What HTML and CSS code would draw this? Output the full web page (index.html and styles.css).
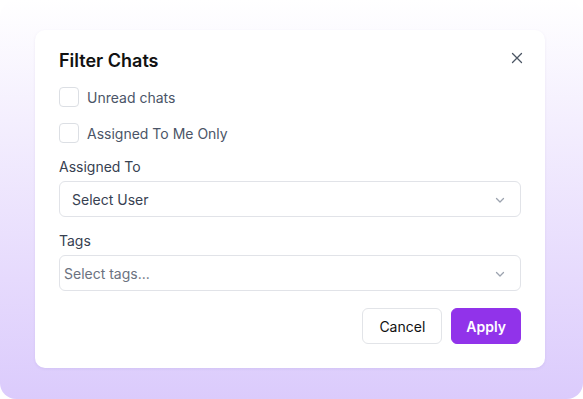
FILE: index.html
```html
<!doctype html>
<html>
  <head>
    <title>Filter Chats</title>
    <meta charset='utf-8'>
    <link rel="stylesheet" href="styles.css">
  </head>
  <body>
    <div class='bg-frame'>
      <div class='fc-dialog'>
        <div class='fc-header'>
          <h2 class='fc-title'>Filter Chats</h2>
          <span class='fc-close'>
            <svg width='12' height='12' viewBox='0 0 12 12'><path d='M1.5 1.5L10.5 10.5M10.5 1.5L1.5 10.5' stroke='#4b5563' stroke-width='1.3' stroke-linecap='round'/></svg>
          </span>
        </div>
        <label class='fc-check'><span class='fc-box'></span>Unread chats</label>
        <label class='fc-check'><span class='fc-box'></span>Assigned To Me Only</label>
        <div class='fc-label'>Assigned To</div>
        <div class='fc-select'>
          <span>Select User</span>
          <svg class='fc-chevron' width='12' height='12' viewBox='0 0 12 12'><path d='M2.5 4.5L6 8L9.5 4.5' fill='none' stroke='#9ca3af' stroke-width='1.3' stroke-linecap='round' stroke-linejoin='round'/></svg>
        </div>
        <div class='fc-label'>Tags</div>
        <div class='fc-select fc-tags'>
          <span>Select tags...</span>
          <svg class='fc-chevron' width='12' height='12' viewBox='0 0 12 12'><path d='M2.5 4.5L6 8L9.5 4.5' fill='none' stroke='#9ca3af' stroke-width='1.3' stroke-linecap='round' stroke-linejoin='round'/></svg>
        </div>
        <div class='fc-actions'>
          <button class='fc-btn fc-cancel'>Cancel</button>
          <button class='fc-btn fc-apply'>Apply</button>
        </div>
      </div>
    </div>
  </body>
</html>
```

FILE: styles.css
```css
body {
  margin: 0;
  background-color: #fff;
  font-family: Inter, 'Noto Sans', sans-serif;
}
.bg-frame {
  width: 583px;
  height: 399px;
  box-sizing: border-box;
  padding: 30px 38px 0 35px;
  border-radius: 16px;
  background: linear-gradient(180deg, #ffffff 0%, #f4effe 30%, #e6dafd 70%, #dbcbfc 100%);
}
.fc-dialog {
  background-color: #fff;
  border-radius: 10px;
  padding: 19px 24px 24px 24px;
  box-shadow: 0 1px 3px rgba(80, 50, 140, 0.08);
}
.fc-header {
  display: flex;
  justify-content: space-between;
  align-items: flex-start;
  margin-bottom: 14px;
}
.fc-title {
  margin: 0;
  font-size: 18px;
  line-height: 24px;
  font-weight: 600;
  color: #111;
}
.fc-close {
  display: flex;
  margin-top: 3px;
  margin-right: -2px;
}
.fc-check {
  display: flex;
  align-items: center;
  gap: 8px;
  height: 20px;
  font-size: 14px;
  color: #4b5567;
  margin-bottom: 16px;
}
.fc-box {
  width: 18px;
  height: 18px;
  border: 1px solid #dcdfe4;
  border-radius: 4px;
}
.fc-label {
  font-size: 14px;
  line-height: 20px;
  color: #374151;
  margin-top: -2px;
  margin-bottom: 4px;
}
.fc-select {
  display: flex;
  align-items: center;
  justify-content: space-between;
  height: 36px;
  box-sizing: border-box;
  border: 1px solid #e1e3e8;
  border-radius: 6px;
  padding: 0 14px 0 12px;
  font-size: 14px;
  color: #374151;
  margin-bottom: 16px;
}
.fc-tags {
  padding-left: 4px;
  color: #6b7280;
  margin-bottom: 17px;
}
.fc-chevron {
  margin-top: 1px;
}
.fc-actions {
  display: flex;
  justify-content: flex-end;
  gap: 9px;
}
.fc-btn {
  height: 36px;
  border-radius: 6px;
  font-family: inherit;
  font-size: 14px;
  padding: 0 16px;
}
.fc-cancel {
  background-color: #fff;
  border: 1px solid #e2e4e8;
  color: #111;
  padding: 0 16px;
}
.fc-apply {
  background-color: #9133ea;
  border: 1px solid #9133ea;
  color: #fff;
  font-weight: 600;
  padding: 0 14px;
}
```
